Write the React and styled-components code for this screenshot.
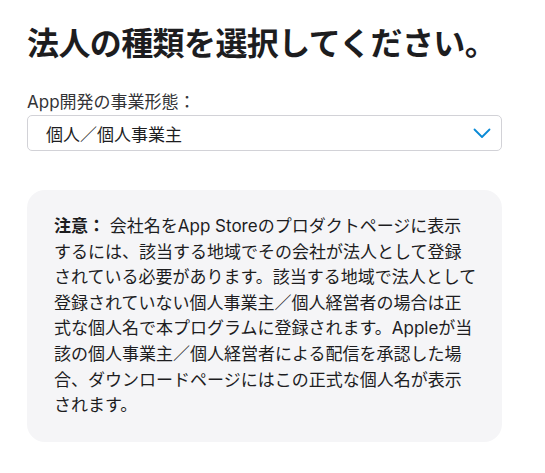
import React from 'react';
import styled, { createGlobalStyle } from 'styled-components';

const GlobalStyle = createGlobalStyle`
  html, body {
    margin: 0;
    padding: 0;
    background: #fff;
  }
  body {
    font-family: Inter, "Noto Sans CJK JP", sans-serif;
    color: #1d1d1f;
    -webkit-font-smoothing: antialiased;
  }
`;

const Page = styled.div`
  display: flex;
  flex-direction: column;
  width: 475px;
  padding: 26px 0 0 27px;
`;

const Title = styled.h1`
  margin: 0;
  font-size: 32px;
  line-height: 36px;
  font-weight: 700;
  color: #1d1d1f;
  letter-spacing: -0.6px;
  white-space: nowrap;
`;

const Field = styled.div`
  display: flex;
  flex-direction: column;
  gap: 2px;
  margin-top: 30px;
`;

const Label = styled.label`
  font-size: 17px;
  line-height: 21px;
  color: #333336;
`;

const SelectBox = styled.div`
  display: flex;
  align-items: center;
  justify-content: space-between;
  height: 36px;
  box-sizing: border-box;
  padding: 0 10px 0 18px;
  border: 1px solid #d2d2d7;
  border-radius: 5px;
  font-size: 17px;
  color: #1d1d1f;
  background: #fff;
`;

const Chevron = () => (
  <svg width="18" height="11" viewBox="0 0 18 11">
    <polyline
      points="1.5,1.5 9,9 16.5,1.5"
      fill="none"
      stroke="#0a8ad6"
      strokeWidth="1.8"
      strokeLinecap="round"
      strokeLinejoin="round"
    />
  </svg>
);

const Note = styled.div`
  margin-top: 39px;
  box-sizing: border-box;
  padding: 24px 20px 23px 27px;
  background: #f5f5f7;
  border-radius: 18px;
  font-size: 17px;
  line-height: 25.6px;
  color: #1d1d1f;
`;

const Line = styled.span`
  display: block;
  white-space: nowrap;
`;

const Strong = styled.strong`
  font-weight: 700;
`;

const lines = [
  'するには、該当する地域でその会社が法人として登録',
  'されている必要があります。該当する地域で法人として',
  '登録されていない個人事業主／個人経営者の場合は正',
  '式な個人名で本プログラムに登録されます。Appleが当',
  '該の個人事業主／個人経営者による配信を承認した場',
  '合、ダウンロードページにはこの正式な個人名が表示',
  'されます。'
];

export default function App() {
  return (
    <>
      <GlobalStyle />
      <Page>
        <Title>法人の種類を選択してください。</Title>
        <Field>
          <Label>App開発の事業形態：</Label>
          <SelectBox>
            <span>個人／個人事業主</span>
            <Chevron />
          </SelectBox>
        </Field>
        <Note>
          <Line>
            <Strong>注意：</Strong> 会社名をApp Storeのプロダクトページに表示
          </Line>
          {lines.map(text => (
            <Line key={text}>{text}</Line>
          ))}
        </Note>
      </Page>
    </>
  );
}
